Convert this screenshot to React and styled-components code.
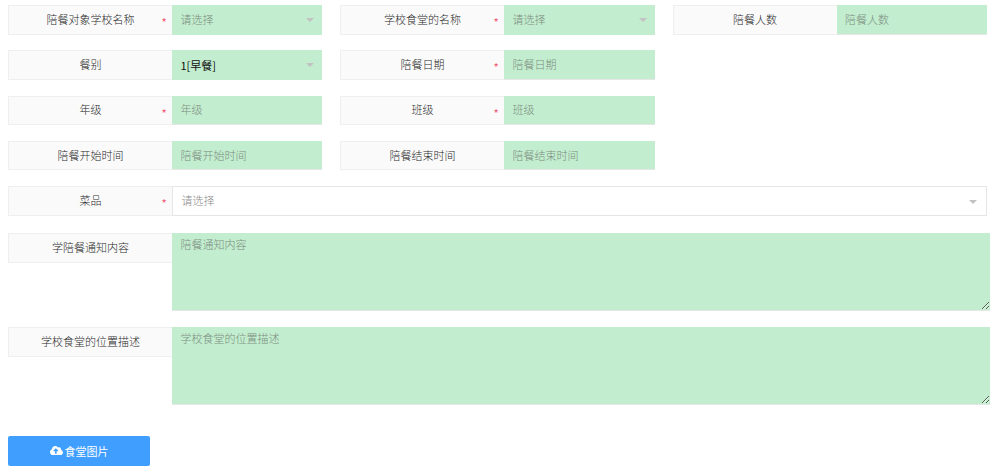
import React from "react";
import styled, { createGlobalStyle } from "styled-components";
import { FaCloudUploadAlt } from "react-icons/fa";

const Global = createGlobalStyle`
  html, body { margin: 0; padding: 0; background: #fff; }
  body { font-family: "Noto Sans CJK SC", "Liberation Sans", sans-serif; font-size: 11px; color: #333; }
  input::placeholder, textarea::placeholder { color: #7d8d82; opacity: 1; }
`;

const Form = styled.form`
  width: 1000px;
  height: 475px;
  box-sizing: border-box;
  padding: 5px 0 0 8px;
  overflow: hidden;
`;

const Row = styled.div`
  display: grid;
  grid-template-columns: 314px 314.5px 314.5px;
  column-gap: 18px;
  height: 30px;
  margin-bottom: ${(p) => p.$gap ?? 15.25}px;
`;

const Field = styled.div`
  display: flex;
  height: ${(p) => p.$height ?? "30px"};
  grid-column: ${(p) => (p.$full ? "1 / -1" : "auto")};
  align-items: flex-start;
`;

const Label = styled.label`
  position: relative;
  flex: 0 0 164px;
  height: 29.5px;
  box-sizing: border-box;
  padding-bottom: 1px;
  display: flex;
  align-items: center;
  justify-content: center;
  background: #fafafa;
  border: 1px solid #efefef;
  border-right: none;
  color: #2a2a2a;
  font-weight: 300;
  line-height: 1;
`;

const Star = styled.span`
  position: absolute;
  right: 5px;
  top: 10px;
  color: #f0405f;
  font-size: 13px;
  line-height: 13px;
`;

const Green = "#c2edce";

const TextInput = styled.input`
  flex: 1;
  min-width: 0;
  height: 29.5px;
  box-sizing: border-box;
  padding: 0 8.5px 1px;
  border: none;
  border-bottom: 1px solid #e6e6e6;
  outline: none;
  background: ${Green};
  font: 300 11px "Noto Sans CJK SC", sans-serif;
`;

const Select = styled.div`
  position: relative;
  flex: 1;
  min-width: 0;
  height: 29.5px;
  box-sizing: border-box;
  padding: 0 8.5px 1px;
  display: flex;
  align-items: center;
  background: ${(p) => (p.$plain ? "#fff" : Green)};
  border: ${(p) => (p.$plain ? "1px solid #e6e6e6" : "none")};
  color: ${(p) => (p.$value ? "#111" : p.$plain ? "#8c8c8c" : "#7d8d82")};
  font-weight: ${(p) => (p.$value ? 400 : 300)};
`;

const Arrow = styled.i`
  position: absolute;
  right: ${(p) => (p.$plain ? "9px" : "8px")};
  top: 12.5px;
  width: 0;
  height: 0;
  border-left: 4px solid transparent;
  border-right: 4px solid transparent;
  border-top: 4.5px solid #c2c2c2;
`;

const Area = styled.textarea`
  flex: 0 0 817.5px;
  height: ${(p) => p.$h}px;
  box-sizing: border-box;
  padding: 2.5px 8.5px;
  border: none;
  border-bottom: 1px solid #e6e6e6;
  outline: none;
  background: ${Green};
  font: 300 11px/16px "Noto Sans CJK SC", sans-serif;
`;

const AreaRow = styled.div`
  height: ${(p) => p.$h}px;
  margin-bottom: ${(p) => p.$gap}px;
`;

const UploadButton = styled.button`
  width: 142px;
  height: 30px;
  display: flex;
  align-items: center;
  justify-content: center;
  gap: 2px;
  padding: 0;
  border: none;
  border-radius: 2px;
  background: #409eff;
  color: #fff;
  font: 400 11px "Noto Sans CJK SC", sans-serif;
`;

const CloudIcon = styled(FaCloudUploadAlt)`
  width: 13px;
  height: 13px;
`;

const InputField = ({ label, required, placeholder }) => (
  <Field>
    <Label>
      {label}
      {required && <Star>*</Star>}
    </Label>
    <TextInput placeholder={placeholder ?? label} readOnly />
  </Field>
);

const SelectField = ({ label, required, value, plain, full }) => (
  <Field $full={full}>
    <Label>
      {label}
      {required && <Star>*</Star>}
    </Label>
    <Select $plain={plain} $value={!!value}>
      {value ?? "请选择"}
      <Arrow $plain={plain} />
    </Select>
  </Field>
);

const AreaField = ({ label, h, gap }) => (
  <AreaRow $h={h} $gap={gap}>
    <Field $height={`${h}px`}>
      <Label>{label}</Label>
      <Area $h={h} placeholder={label === "学陪餐通知内容" ? "陪餐通知内容" : label} readOnly />
    </Field>
  </AreaRow>
);

export default function App() {
  return (
    <>
      <Global />
      <Form>
        <Row>
          <SelectField label="陪餐对象学校名称" required />
          <SelectField label="学校食堂的名称" required />
          <InputField label="陪餐人数" />
        </Row>
        <Row>
          <SelectField label="餐别" value="1[早餐]" />
          <InputField label="陪餐日期" required />
        </Row>
        <Row>
          <InputField label="年级" required />
          <InputField label="班级" required />
        </Row>
        <Row>
          <InputField label="陪餐开始时间" />
          <InputField label="陪餐结束时间" />
        </Row>
        <Row $gap={17}>
          <SelectField label="菜品" required plain full />
        </Row>
        <AreaField label="学陪餐通知内容" h={77.5} gap={16.5} />
        <AreaField label="学校食堂的位置描述" h={78} gap={30.5} />
        <UploadButton type="button">
          <CloudIcon />
          食堂图片
        </UploadButton>
      </Form>
    </>
  );
}
